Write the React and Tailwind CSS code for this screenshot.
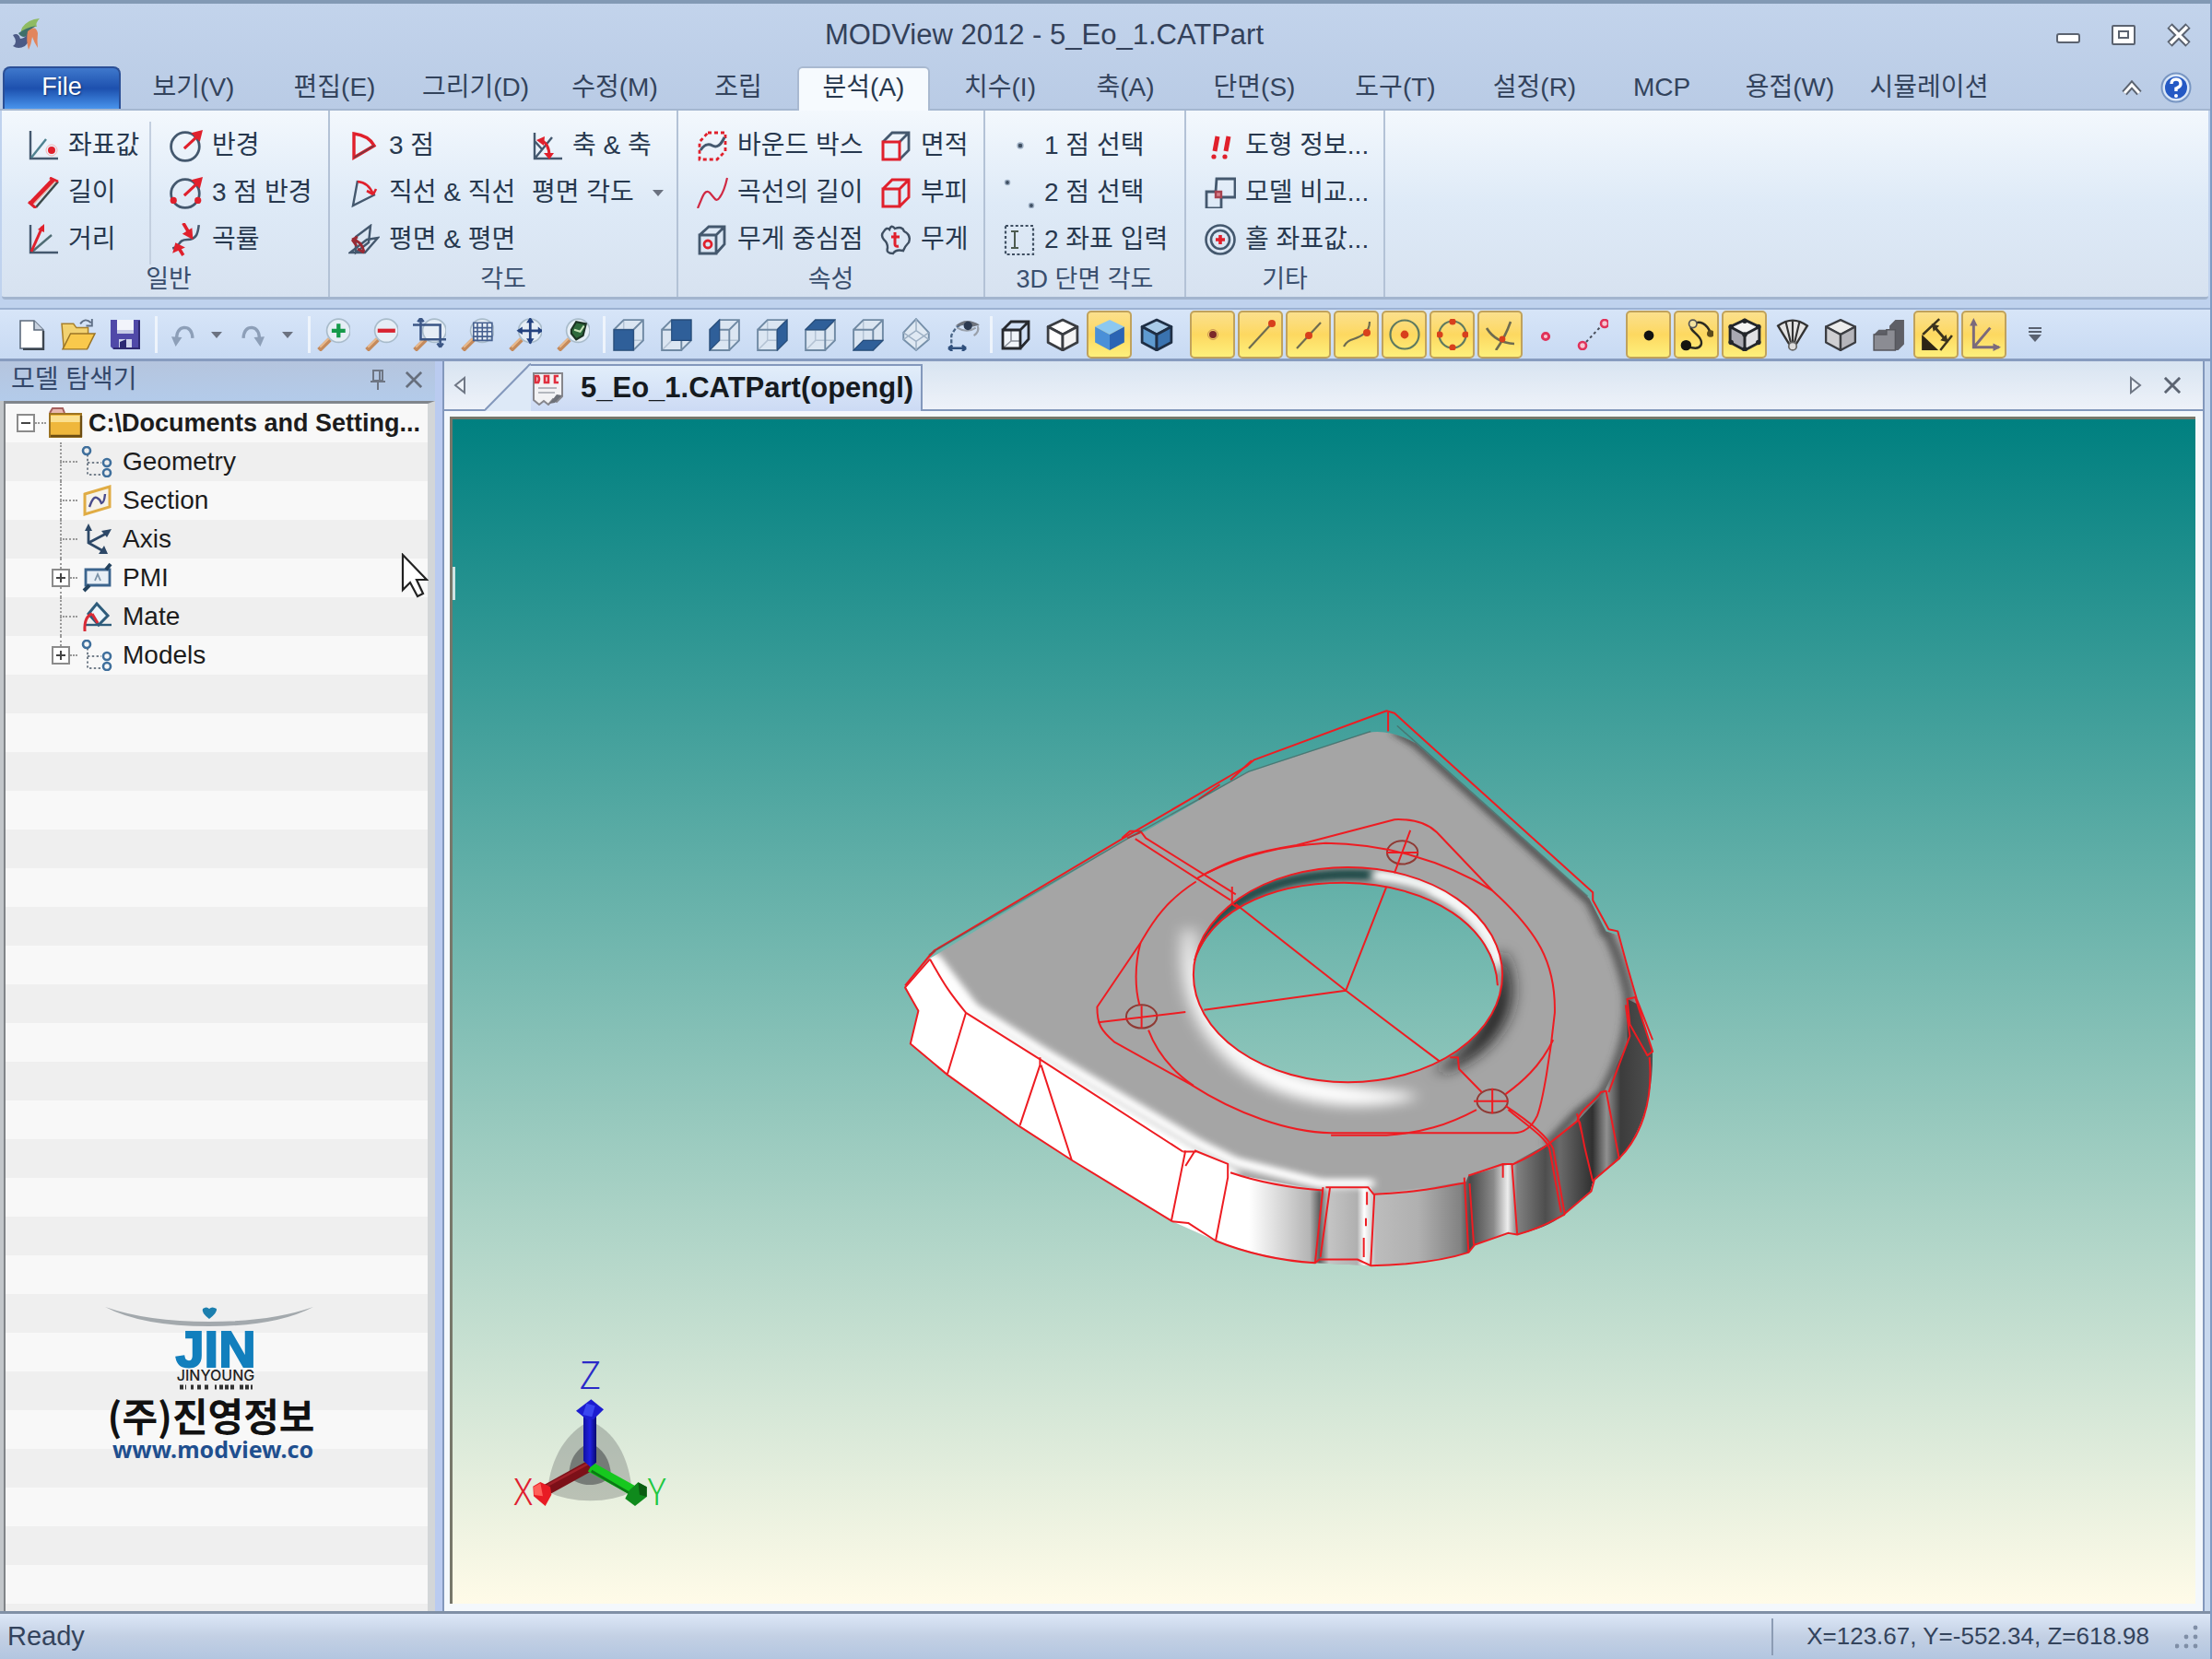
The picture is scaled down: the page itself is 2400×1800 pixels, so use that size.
import React from "react";

const LATIN = "font-['Liberation_Sans','Noto_Sans_CJK_KR',sans-serif]";

function Icon({ size = "h-[34px] w-[34px]", children }) {
  return (
    <svg viewBox="0 0 34 34" className={`shrink-0 ${size}`} fill="none" strokeWidth="2.4" aria-hidden="true">
      {children}
    </svg>
  );
}

const SLATE = "#44586e";
const RED = "#e0202c";

/* ---------- ribbon icons ---------- */
const ribbonIcons = {
  coord: (
    <Icon>
      <path d="M3 1V31H33" stroke={SLATE} />
      <path d="M4 30L20 10" stroke="#4f8290" />
      <circle cx="26" cy="22" r="4" fill={RED} />
      <circle cx="26" cy="22" r="6" stroke="#f3b3b3" strokeWidth="1" />
    </Icon>
  ),
  length: (
    <Icon>
      <path d="M9 33L33 5" stroke="#3d4a4a" strokeWidth="2.6" />
      <path d="M3 29L28 3" stroke={RED} strokeWidth="5" />
      <path d="M1 27L9 34M24 1L33 5" stroke={RED} strokeWidth="3" />
      <path d="M7 29L30 5" stroke="#e9b7a5" strokeWidth="1.2" />
    </Icon>
  ),
  distance: (
    <Icon>
      <path d="M3 1V31H33" stroke={SLATE} />
      <path d="M5 30L26 12" stroke="#4f6c74" />
      <path d="M4 30L16 3" stroke={RED} strokeWidth="3" />
      <path d="M18 0L11 6L18 9Z" fill={RED} />
    </Icon>
  ),
  radius: (
    <Icon size="h-9 w-9">
      <circle cx="16" cy="18" r="14.5" stroke={SLATE} strokeWidth="2.6" />
      <path d="M15 20L29 7" stroke={RED} strokeWidth="3" />
      <path d="M34 1L22 4L31 13Z" fill={RED} />
    </Icon>
  ),
  radius3: (
    <Icon size="h-9 w-9">
      <circle cx="16" cy="18" r="14.5" stroke={SLATE} strokeWidth="2.6" />
      <path d="M15 20L29 7" stroke={RED} strokeWidth="3" />
      <path d="M34 1L22 4L31 13Z" fill={RED} />
      <circle cx="4" cy="25" r="3.4" fill={RED} />
      <circle cx="29" cy="25" r="3.4" fill={RED} />
    </Icon>
  ),
  curvature: (
    <Icon size="h-9 w-9">
      <path d="M3 26C12 24 8 17 18 17S29 10 30 2" stroke={SLATE} />
      <path d="M14 0L21 12" stroke={RED} strokeWidth="3.4" />
      <path d="M24 17L13 11L23 5Z" fill={RED} />
      <path d="M14 33L9 25" stroke={RED} strokeWidth="3.4" />
      <path d="M6 20L3 31L16 25Z" fill={RED} />
    </Icon>
  ),
  angle3: (
    <Icon>
      <path d="M6 4V30L28 17Q22 6 6 4Z" stroke={RED} strokeWidth="3.4" />
      <path d="M6 30L28 17" stroke="#7c3740" strokeWidth="2" />
    </Icon>
  ),
  angleLine: (
    <Icon>
      <path d="M10 4L5 31L29 19" stroke={SLATE} />
      <path d="M10 5Q22 6 27 19M27 19L20 15M27 19L30 13" stroke={RED} strokeWidth="2.6" />
    </Icon>
  ),
  anglePlane: (
    <Icon>
      <path d="M8 14L24 2L22 20L8 31Z" stroke={SLATE} fill="#dbe6f2" />
      <path d="M2 31L20 17L32 15L18 31Z" stroke={SLATE} />
      <path d="M4 17Q14 18 17 30M4 17L10 14M4 17L9 24M17 31L10 27" stroke="#9b2933" strokeWidth="2.8" />
    </Icon>
  ),
  axisAxis: (
    <Icon>
      <path d="M3 3V31H33M4 30L22 8M3 12L12 22" stroke={SLATE} />
      <path d="M9 11Q19 14 19 29" stroke={RED} strokeWidth="3" />
      <path d="M5 11L14 7L13 17ZM19 32L13 25H24Z" fill={RED} />
    </Icon>
  ),
  bound: (
    <Icon>
      <path d="M12 3H31V23L22 32H3V13Z" stroke={RED} strokeWidth="2.8" strokeDasharray="4 3" />
      <path d="M4 22Q10 13 17 17T30 8" stroke={SLATE} strokeWidth="3" />
    </Icon>
  ),
  curve: (
    <Icon>
      <path d="M1 34L6 22Q10 13 14 17L19 23Q22 27 25 22Q30 15 33 1" stroke="#d02a44" strokeWidth="2.2" />
    </Icon>
  ),
  center: (
    <Icon>
      <path d="M3 12H21V32H3ZM3 12L13 3H30V22L21 32M21 12L30 3" stroke={SLATE} strokeWidth="2.8" />
      <circle cx="12" cy="22" r="4" stroke={RED} strokeWidth="2.8" />
    </Icon>
  ),
  area: (
    <Icon>
      <path d="M3 13L13 3H31V22L21 32M21 13L31 3" stroke={SLATE} strokeWidth="2.8" />
      <path d="M3 13H21V32H3Z" stroke={RED} strokeWidth="3" />
    </Icon>
  ),
  volume: (
    <Icon>
      <path d="M3 13H21V32H3ZM3 13L13 3H31V22L21 32M21 13L31 3" stroke={RED} strokeWidth="3" />
    </Icon>
  ),
  weight: (
    <Icon>
      <path d="M10 6Q12 0 16 5Q24 2 26 8Q34 12 31 20Q27 24 25 29Q17 27 14 32Q6 32 8 26Q8 20 4 17Q0 12 4 8Q7 3 10 6Z" stroke="#3f4f62" />
      <path d="M16 9V22Q16 25 20 24M12 14H21" stroke={RED} strokeWidth="3" />
    </Icon>
  ),
  point1: (
    <Icon>
      <circle cx="18" cy="17" r="3" fill="#3f4f62" stroke="#9fb0c4" strokeWidth="1.4" />
    </Icon>
  ),
  point2: (
    <Icon>
      <circle cx="4" cy="6" r="2.6" fill="#3f4f62" stroke="#9fb0c4" strokeWidth="1.4" />
      <circle cx="30" cy="31" r="2.6" fill="#3f4f62" stroke="#9fb0c4" strokeWidth="1.4" />
    </Icon>
  ),
  input2: (
    <Icon>
      <rect x="2" y="2" width="30" height="31" stroke="#3f4f62" strokeWidth="2.2" strokeDasharray="3 2.4" />
      <path d="M8 8H16M12 8V26M8 26H16" stroke="#4d5b50" strokeWidth="2" />
    </Icon>
  ),
  info: (
    <Icon>
      <path d="M14 7L11 23M26 7L23 23" stroke={RED} strokeWidth="5" />
      <circle cx="10" cy="29" r="2.6" fill={RED} />
      <circle cx="22" cy="29" r="2.6" fill={RED} />
    </Icon>
  ),
  compare: (
    <Icon>
      <path d="M13 2H33V22H18V34H2V16H12Z" stroke={SLATE} strokeWidth="2.8" />
      <path d="M12 16H18V22H12Z" fill="#d9808a" stroke="#a8424f" />
    </Icon>
  ),
  hole: (
    <Icon>
      <circle cx="17" cy="17" r="15.5" stroke={SLATE} strokeWidth="2.6" />
      <circle cx="17" cy="17" r="10" stroke={SLATE} strokeWidth="2.6" />
      <path d="M17 12V22M12 17H22" stroke={RED} strokeWidth="3.6" />
    </Icon>
  ),
};

/* ---------- toolbar icons ---------- */
function FaceCube({ face }) {
  return (
    <Icon size="h-9 w-[38px]">
      <path d="M2 12L12 2H32V23L22 33H2Z" fill="#dbe6f2" />
      <path d="M12 2V23H32M12 23L2 33" stroke="#b4c3d4" strokeWidth="1.4" />
      <path d="M2 12H22V33H2ZM2 12L12 2H32V23L22 33M22 12L32 2" stroke="#6f89a3" strokeWidth="1.8" />
      {face && <path d={face} fill="#2f5f99" stroke="#234a7a" strokeWidth="1" />}
    </Icon>
  );
}

function IsoCube({ top, left, right, stroke = "none", sw = 2.6 }) {
  return (
    <Icon size="h-9 w-9">
      <path d="M17 2L32 9L17 17L2 9Z" fill={top} stroke={stroke} strokeWidth={sw} strokeLinejoin="round" />
      <path d="M2 9L17 17V33L2 25Z" fill={left} stroke={stroke} strokeWidth={sw} strokeLinejoin="round" />
      <path d="M32 9L17 17V33L32 25Z" fill={right} stroke={stroke} strokeWidth={sw} strokeLinejoin="round" />
    </Icon>
  );
}

function Lens({ children }) {
  return (
    <Icon size="h-9 w-9">
      <path d="M13 22L2 33" stroke="#c48a5c" strokeWidth="5" />
      <path d="M12 21L3 30" stroke="#e8b98c" strokeWidth="2" />
      <circle cx="22" cy="13" r="12" fill="#e6eef6" stroke="#a9bccb" strokeWidth="1.6" />
      {children}
    </Icon>
  );
}

const fileTools = [
  ["새 파일", <Icon><path d="M5 2H20L30 12V32H5Z" fill="#fff" stroke="#5d6b7c" strokeWidth="1.6" /><path d="M20 2V12H30" fill="#c8d2e0" stroke="#5d6b7c" strokeWidth="1.6" /><path d="M30 13V33H8" stroke="#3d4650" strokeWidth="2.4" /></Icon>],
  ["열기", <Icon size="h-9 w-10"><path d="M0 6H12L15 10H27V30H2Z" fill="#f2d271" stroke="#a87f2a" strokeWidth="1.4" /><path d="M9 16H34L26 32H1Z" fill="#f9c94c" stroke="#9a7426" strokeWidth="1.4" /><path d="M19 6Q24 -1 30 5M31 1V8H25" stroke="#5f6f86" strokeWidth="1.8" /></Icon>],
  ["저장", <Icon><path d="M1 1H33V33H4L1 30Z" fill="#5049a8" /><path d="M8 1H26V16H8Z" fill="#f2f4fb" /><path d="M8 12H26V16H8Z" fill="#c6cbe6" /><path d="M10 22H24V33H10Z" fill="#cfd3ec" /><path d="M11 25L18 22V33H11Z" fill="#2c2873" /><path d="M32 2V32H4" stroke="#2f2a72" strokeWidth="2" /></Icon>],
];

const undoIcon = <Icon size="h-7 w-[26px]"><path d="M7 26Q7 8 18 7Q29 7 30 22" stroke="#8d9fb8" strokeWidth="4.4" /><path d="M0 20L15 21L6 34Z" fill="#8d9fb8" /></Icon>;
const redoIcon = <Icon size="h-7 w-[26px]"><path d="M4 22Q5 7 16 7Q27 8 27 26" stroke="#8d9fb8" strokeWidth="4.4" /><path d="M34 20L19 21L28 34Z" fill="#8d9fb8" /></Icon>;

const zoomTools = [
  ["확대", <Lens><path d="M22 6V20M15 13H29" stroke="#159a4a" strokeWidth="4" /></Lens>],
  ["축소", <Lens><path d="M13 13H31" stroke="#d8232f" strokeWidth="4" /></Lens>],
  ["영역 확대", <Lens><path d="M8 2V22H34M0 7H28V30M28 30L25 26M28 30L31 26M8 0L5 4M8 0L11 4" stroke="#3b5685" strokeWidth="2.4" /></Lens>],
  ["창 확대", <Lens><path d="M13 5H32V23H13ZM17 5V23M22 5V23M27 5V23M13 10H32M13 14H32M13 19H32" stroke="#46608f" strokeWidth="1.5" /></Lens>],
  ["전체 보기", <Lens><path d="M22 1V26M10 13H34" stroke="#24427f" strokeWidth="2.6" /><path d="M22 -1L18 5H26ZM22 27L18 21H26ZM8 13L14 9V17ZM35 13L30 9V17Z" fill="#24427f" /></Lens>],
  ["선택 확대", <Lens><path d="M15 12L20 4L30 6L27 18L20 22L15 16Z" fill="#2f6a3c" stroke="#1c3323" strokeWidth="2" /><path d="M18 12L24 14L28 8" stroke="#c7e2b8" strokeWidth="2" /></Lens>],
];

const viewTools = [
  ["정면", <FaceCube face="M2 12H22V33H2Z" />],
  ["후면", <FaceCube face="M12 2H32V23H12Z" />],
  ["좌측", <FaceCube face="M2 12L12 2V23L2 33Z" />],
  ["우측", <FaceCube face="M22 12L32 2V23L22 33Z" />],
  ["윗면", <FaceCube face="M2 12L12 2H32L22 12Z" />],
  ["아랫면", <FaceCube face="M2 33L12 23H32L22 33Z" />],
  ["등각", <Icon size="h-9 w-9"><path d="M17 1L30 15V22L17 33L4 22V15Z" fill="#dfe9f3" stroke="#7690aa" strokeWidth="1.8" /><path d="M4 15L17 24L30 15M17 24V33M4 22L17 13L30 22M17 1V13" stroke="#9db0c4" strokeWidth="1.4" /></Icon>],
  ["시점", <Icon size="h-9 w-[38px]"><path d="M4 32V18Q9 7 17 6" stroke="#4c6788" strokeWidth="2.2" strokeDasharray="4 2" /><path d="M1 31H19M1 31L5 28M1 31L5 34M19 31L15 28M19 31L15 34" stroke="#2f4f7c" /><path d="M8 8Q19 -2 33 7L26 9Q21 4 14 8Z" fill="#6f747d" /><path d="M10 10Q20 16 29 10M31 8Q33 14 27 18" stroke="#9aa1ab" strokeWidth="2" /><circle cx="21" cy="8" r="4.4" fill="#2c3a50" /></Icon>],
];

const shadeTools = [
  ["와이어프레임", <Icon><path d="M3 12H22V32H3Z" fill="#f1f5fa" /><path d="M12 12V24H22M12 24L4 31" stroke="#8b9099" strokeWidth="1.6" /><path d="M3 12H22V32H3ZM3 12L12 3H31V22L22 32M22 12L31 3" stroke="#26292e" strokeWidth="2.8" /></Icon>],
  ["은선", <IsoCube top="#fff" left="#fff" right="#f4f4f4" stroke="#3a3d42" />],
  ["음영", <IsoCube top="#8cc8f0" left="#4a90d8" right="#2a64b4" />, true],
  ["모서리 음영", <IsoCube top="#a9cbe8" left="#5f9bd0" right="#3a73b0" stroke="#1f2f45" />],
];

const PT = "#d8401c";
const snapTools = [
  ["점", <Icon><circle cx="17" cy="17" r="4" fill="#7c2a2a" /><circle cx="17" cy="17" r="5.4" stroke="#c79050" strokeWidth="1" /></Icon>],
  ["끝점", <Icon><path d="M4 32L27 7" stroke="#6e6c50" strokeWidth="2.2" /><circle cx="29" cy="5" r="4" fill={PT} /></Icon>],
  ["중간점", <Icon><path d="M4 32L30 4" stroke="#6e6c50" strokeWidth="2.2" /><circle cx="17" cy="18" r="4" fill={PT} /></Icon>],
  ["근처점", <Icon><path d="M3 30C8 20 16 24 25 16Q31 12 31 3" stroke="#6e6c50" strokeWidth="2.2" /><circle cx="28" cy="15" r="4" fill={PT} /></Icon>],
  ["중심점", <Icon><circle cx="17" cy="17" r="15.5" stroke="#5f7a60" strokeWidth="2.2" /><circle cx="17" cy="17" r="4.4" fill={PT} /></Icon>],
  ["사분점", <Icon><circle cx="17" cy="17" r="14.5" stroke="#5f7a60" strokeWidth="2.2" />{[[17, 3], [17, 31], [3, 17], [31, 17]].map(([x, y]) => <circle key={`${x}-${y}`} cx={x} cy={y} r="3.6" fill={PT} />)}</Icon>],
  ["교차점", <Icon><path d="M2 10Q12 26 32 27M28 3Q22 20 12 34" stroke="#6e6c50" strokeWidth="2.6" /><circle cx="19" cy="22" r="3.4" fill={PT} /></Icon>],
];

const pointTools = [
  ["자유점", <Icon><circle cx="17" cy="19" r="3.6" stroke="#e0325a" strokeWidth="3" fill="#f7c7d2" /></Icon>],
  ["두 점", <Icon><path d="M10 25L26 8" stroke="#4a4f5c" strokeWidth="2" strokeDasharray="3 3" /><circle cx="6" cy="29" r="4" stroke="#e0325a" strokeWidth="2.6" fill="#f7c7d2" /><circle cx="30" cy="5" r="4" stroke="#e0325a" strokeWidth="2.6" fill="#f7c7d2" /></Icon>],
];

const filterTools = [
  ["정점", <Icon><circle cx="17" cy="18" r="5.4" fill="#111" /></Icon>, true],
  ["모서리", <Icon size="h-9 w-9"><path d="M7 29C24 35 24 24 18 18S8 10 14 6S27 6 31 15" stroke="#2b2a20" strokeWidth="2.4" /><circle cx="6" cy="28" r="5.4" fill="#15140f" /><circle cx="13" cy="6" r="4" fill="#f3e3a0" stroke="#555" strokeWidth="1.6" /><circle cx="31" cy="16" r="3.6" fill="#5b4a1c" /></Icon>, true],
  ["면", <Icon size="h-9 w-9"><path d="M17 2L32 9L17 17L2 9Z" fill="#f4f4f4" /><path d="M2 9L17 17V33L2 25Z" fill="#a9a9b2" /><path d="M32 9L17 17V33L32 25Z" fill="#e0e0e4" /><path d="M17 2L32 9V25L17 33L2 25V9ZM2 9L17 17L32 9M17 17V33" stroke="#23262b" strokeWidth="2.8" strokeLinejoin="round" />{[[17, 3], [31, 9], [31, 25], [17, 32], [3, 25], [3, 9], [17, 17]].map(([x, y]) => <circle key={`${x}-${y}`} cx={x} cy={y} r="2.6" fill="#23262b" />)}</Icon>, true],
  ["서피스", <Icon size="h-9 w-9"><path d="M2 8Q17 -3 32 8L21 26Q17 31 13 26Z" fill="#e4e4e4" stroke="#333" strokeWidth="2.2" /><path d="M10 4L15 25M17 3V25M24 4L19 25" stroke="#333" strokeWidth="2" /><circle cx="17" cy="29" r="4" fill="#dcdcdc" stroke="#666" strokeWidth="1.6" /></Icon>],
  ["솔리드", <IsoCube top="#ededed" left="#cfcfd2" right="#b5b5bb" stroke="#3b3d42" sw={2.2} />],
  ["파트", <Icon size="h-9 w-[38px]"><path d="M2 17L7 12H18V8L24 2H33V27L27 33H2Z" fill="#5e5f66" /><path d="M2 17H15V12H24V33H2Z" fill="#8b8c93" stroke="#55565c" strokeWidth="1.4" /></Icon>],
  ["치수", <Icon size="h-9 w-9"><path d="M2 17L19 33H2Z" fill="#2c2416" /><path d="M3 17L20 1M21 33L33 18" stroke="#3b331d" strokeWidth="2.4" /><path d="M14 8L27 23" stroke="#3b331d" strokeWidth="2.8" /><path d="M12 6L20 8L14 14ZM29 25L21 23L27 17Z" fill="#3b331d" /></Icon>, true],
  ["좌표축", <Icon size="h-9 w-9"><path d="M6 3V30H32M7 29L23 10" stroke="#7b6a7c" strokeWidth="2.8" /><path d="M6 0L2 8H10ZM34 30L26 26V34Z" fill="#7b6a7c" /></Icon>, true],
];

function Tool({ label, on, children }) {
  return (
    <button
      type="button"
      aria-label={label}
      className={
        on
          ? "flex h-[52px] w-[49px] items-center justify-center rounded-[5px] border-2 border-[#c0a25c] bg-linear-to-b from-[#fbe08c] via-[#fdd860] to-[#fdf07c]"
          : "flex h-[52px] w-[49px] items-center justify-center"
      }
    >
      {children}
    </button>
  );
}

function Caret() {
  return (
    <svg viewBox="0 0 12 8" className="h-2 w-3" aria-hidden="true">
      <path d="M0 1H12L6 8Z" fill="#6b7280" />
    </svg>
  );
}

const Divider = ({ className }) => <span className={`h-10 w-[3px] shrink-0 bg-[#eef4fc] ${className}`} />;

/* ---------- ribbon ---------- */
const tabs = [
  ["보기(V)", "w-[152px]"],
  ["편집(E)", "w-[154px]"],
  ["그리기(D)", "w-[152px]"],
  ["수정(M)", "w-[150px]"],
  ["조립", "w-[118px]"],
  ["분석(A)", "w-[154px]"],
  ["치수(I)", "w-[142px]"],
  ["축(A)", "w-[130px]"],
  ["단면(S)", "w-[150px]"],
  ["도구(T)", "w-[156px]"],
  ["설정(R)", "w-[146px]"],
  ["MCP", "w-[130px]"],
  ["용접(W)", "w-[148px]"],
  ["시뮬레이션", "w-[154px]"],
];

function Item({ icon, children }) {
  return (
    <button type="button" className="flex h-[51px] items-center gap-2.5 text-[28px] leading-[51px] whitespace-nowrap text-[#27384e]">
      {ribbonIcons[icon]}
      {children}
    </button>
  );
}

function Group({ label, className, children }) {
  return (
    <section aria-label={label} className={`flex flex-col border-r-2 border-[#b3c2d6] pt-3 ${className}`}>
      <div className="flex flex-1">{children}</div>
      <h2 className="-ml-5 pb-[3px] text-center text-[27px] leading-8 text-[#3a4f6e]">{label}</h2>
    </section>
  );
}

function Ribbon() {
  return (
    <div className="mx-[2px] flex h-[205px] rounded-b-sm border-b-[3px] border-[#a3b5ce] bg-linear-to-b from-[#f3f8fd] via-[#deeaf7] to-[#d7e2f0]">
      <Group label="일반" className="w-[356px] pl-7">
        <div className="w-[134px] border-r-2 border-[#c3cfdf]">
          <Item icon="coord">좌표값</Item>
          <Item icon="length">길이</Item>
          <Item icon="distance">거리</Item>
        </div>
        <div className="pl-5">
          <Item icon="radius">반경</Item>
          <Item icon="radius3">3 점 반경</Item>
          <Item icon="curvature">곡률</Item>
        </div>
      </Group>
      <Group label="각도" className="w-[378px] pl-5">
        <div className="w-[199px]">
          <Item icon="angle3">3 점</Item>
          <Item icon="angleLine">직선 &amp; 직선</Item>
          <Item icon="anglePlane">평면 &amp; 평면</Item>
        </div>
        <div>
          <Item icon="axisAxis">축 &amp; 축</Item>
          <button type="button" className="flex h-[51px] items-center gap-5 text-[28px] whitespace-nowrap text-[#27384e]">
            평면 각도
            <Caret />
          </button>
        </div>
      </Group>
      <Group label="속성" className="w-[333px] pl-5">
        <div className="w-[199px]">
          <Item icon="bound">바운드 박스</Item>
          <Item icon="curve">곡선의 길이</Item>
          <Item icon="center">무게 중심점</Item>
        </div>
        <div>
          <Item icon="area">면적</Item>
          <Item icon="volume">부피</Item>
          <Item icon="weight">무게</Item>
        </div>
      </Group>
      <Group label="3D 단면 각도" className="w-[218px] pl-5">
        <div>
          <Item icon="point1">1 점 선택</Item>
          <Item icon="point2">2 점 선택</Item>
          <Item icon="input2">2 좌표 입력</Item>
        </div>
      </Group>
      <Group label="기타" className="w-[216px] pl-5">
        <div>
          <Item icon="info">도형 정보...</Item>
          <Item icon="compare">모델 비교...</Item>
          <Item icon="hole">홀 좌표값...</Item>
        </div>
      </Group>
    </div>
  );
}

function TitleBar() {
  return (
    <header className="bg-linear-to-b from-[#c3d4ec] to-[#b9cbe5]">
      <div className="flex h-[72px] items-center border-t-4 border-[#8299b4] px-3">
        <svg viewBox="0 0 36 36" className="h-9 w-9" aria-hidden="true">
          <path d="M12 10Q18 1 31 0Q26 5 28 9Q20 8 14 18Q9 16 12 10Z" fill="#8fbb62" />
          <path d="M8 16Q16 10 27 8Q19 13 17 19Q12 22 8 16Z" fill="#3f6f6a" />
          <path d="M2 18Q8 15 10 22Q17 21 18 15Q22 24 15 30Q8 34 2 30Q8 26 2 18Z" fill="#4b5a86" />
          <path d="M18 14Q27 6 29 16Q28 24 29 32Q25 26 23 20Q22 28 19 34Q16 24 18 14Z" fill="#e2855c" />
        </svg>
        <h1 className="flex-1 pr-3 text-center text-[31px] leading-10 text-[#33415a]">MODView 2012 - 5_Eo_1.CATPart</h1>
        <div className="flex items-center gap-8 pr-2">
          <button type="button" aria-label="최소화">
            <svg viewBox="0 0 28 28" className="h-7 w-7" fill="#fff" stroke="#5b6370" strokeWidth="2"><rect x="2" y="13" width="24" height="9" rx="2" /></svg>
          </button>
          <button type="button" aria-label="최대화">
            <svg viewBox="0 0 28 28" className="h-7 w-7" fill="#fff" stroke="#5b6370" strokeWidth="2"><rect x="2" y="4" width="24" height="20" rx="1" /><rect x="9" y="10" width="10" height="7" /></svg>
          </button>
          <button type="button" aria-label="닫기">
            <svg viewBox="0 0 28 28" className="h-7 w-7"><path d="M4 4L24 24M24 4L4 24" stroke="#5b6370" strokeWidth="7.5" /><path d="M5 5L23 23M23 5L5 23" stroke="#fff" strokeWidth="3.6" /></svg>
          </button>
        </div>
      </div>
      <nav className="flex h-12 items-stretch border-b-2 border-[#a5b7d0] pl-[3px] text-[28px] text-[#33435c]">
        <button type="button" className="mr-[3px] w-32 rounded-t-lg border-2 border-b-0 border-[#2b4f96] bg-linear-to-b from-[#3f78cc] via-[#1d50ae] to-[#4a94ec] pb-1 text-[27px] text-white [text-shadow:1px_1px_2px_#12316b]">
          File
        </button>
        {tabs.map(([name, width]) => {
          const active = name === "분석(A)";
          return (
            <button
              key={name}
              type="button"
              aria-pressed={active}
              className={`${width} shrink-0 leading-10 ${active ? "-mb-[2px] px-[5px]" : ""}`}
            >
              {active ? (
                <span className="block h-full rounded-t-md border-2 border-b-0 border-[#a9b9d0] bg-[#f6fafe] leading-[42px] text-[#27384e]">{name}</span>
              ) : (
                name
              )}
            </button>
          );
        })}
        <span className="ml-auto flex items-center gap-5 pr-5">
          <button type="button" aria-label="리본 접기">
            <svg viewBox="0 0 22 22" className="h-[22px] w-[22px]"><path d="M3 17L11 8L19 17" fill="none" stroke="#5b6370" strokeWidth="7" /><path d="M3 17L11 8L19 17" fill="none" stroke="#fff" strokeWidth="3" /></svg>
          </button>
          <button type="button" aria-label="도움말">
            <svg viewBox="0 0 34 34" className="h-[34px] w-[34px]">
              <circle cx="17" cy="17" r="15.5" fill="#dbe8f8" stroke="#7795c2" strokeWidth="2" />
              <circle cx="17" cy="17" r="12" fill="#2459c4" />
              <path d="M12 13Q12 8 17 8T22 13Q22 16 17 18V21" fill="none" stroke="#fff" strokeWidth="3.4" />
              <circle cx="17" cy="26" r="2" fill="#fff" />
            </svg>
          </button>
        </span>
      </nav>
    </header>
  );
}

function Toolbar() {
  return (
    <div role="toolbar" className="mt-[9px] flex h-[58px] items-center border-t-2 border-b-[3px] border-t-[#9cb1d2] border-b-[#879cbf] bg-linear-to-b from-[#d7e5f8] to-[#c8daf3]">
      <div className="flex gap-[2px] pl-[9px]">
        {fileTools.map(([l, i]) => <Tool key={l} label={l}>{i}</Tool>)}
      </div>
      <Divider className="ml-2" />
      <div className="flex items-center pl-[3px]">
        <Tool label="실행 취소">{undoIcon}</Tool>
        <span className="w-[6px]" />
        <Caret />
        <span className="w-2" />
        <Tool label="다시 실행">{redoIcon}</Tool>
        <span className="w-2" />
        <Caret />
      </div>
      <Divider className="ml-4" />
      <div className="flex gap-[3px]">
        {zoomTools.map(([l, i]) => <Tool key={l} label={l}>{i}</Tool>)}
      </div>
      <Divider className="ml-2" />
      <div className="flex gap-[3px] pr-1">
        {viewTools.map(([l, i]) => <Tool key={l} label={l}>{i}</Tool>)}
      </div>
      <Divider />
      <div className="flex gap-[2px]">
        {shadeTools.map(([l, i, on]) => <Tool key={l} label={l} on={on}>{i}</Tool>)}
      </div>
      <div className="ml-3 flex gap-[3px]">
        {snapTools.map(([l, i]) => <Tool key={l} label={l} on>{i}</Tool>)}
      </div>
      <div className="flex gap-[2px]">
        {pointTools.map(([l, i]) => <Tool key={l} label={l}>{i}</Tool>)}
      </div>
      <div className="ml-3 flex gap-[3px]">
        {filterTools.map(([l, i, on]) => <Tool key={l} label={l} on={on}>{i}</Tool>)}
      </div>
      <button type="button" aria-label="도구 더 보기" className="ml-6">
        <svg viewBox="0 0 14 18" className="h-[18px] w-3.5"><path d="M0 2H14M0 6H14" stroke="#5a6270" strokeWidth="2" /><path d="M0 9H14L7 17Z" fill="#5a6270" /></svg>
      </button>
    </div>
  );
}

/* ---------- model tree ---------- */
const nodeIcon = (
  <Icon>
    <path d="M7 9V31H22M7 18H22" stroke="#75808c" strokeWidth="2" strokeDasharray="2.4 2.4" />
    <circle cx="6" cy="5" r="4" stroke="#3f6f9c" strokeWidth="2.6" />
    <circle cx="28" cy="18" r="4" stroke="#3f6f9c" strokeWidth="2.6" />
    <circle cx="28" cy="29" r="4" stroke="#3f6f9c" strokeWidth="2.6" />
  </Icon>
);

const nodes = [
  ["Geometry", false, nodeIcon],
  ["Section", false, <Icon><path d="M4 10L31 2V24L4 32Z" stroke="#e0ac44" strokeWidth="3" fill="#f6f3ea" /><path d="M9 24Q13 12 17 14T22 20Q25 20 26 10" stroke="#4a4c8c" strokeWidth="2.4" /></Icon>],
  ["Axis", false, <Icon><path d="M8 4V21L26 31M8 21L27 11" stroke="#2d4867" strokeWidth="2.8" /><path d="M8 0L4 8H12ZM33 6L22 8L28 15ZM29 33L19 33L25 24Z" fill="#2d4867" /></Icon>],
  ["PMI", true, <Icon><path d="M5 8H31V25H5Z" stroke="#3c658e" strokeWidth="2.8" fill="#e8eff6" /><path d="M3 31L9 25M27 8L32 2" stroke="#24435f" strokeWidth="4" /><path d="M15 20L18 13L21 20" stroke="#7c93a8" strokeWidth="1.8" /></Icon>],
  ["Mate", false, <Icon><path d="M17 3L29 16L19 26L8 14Z" stroke="#2e5c7b" strokeWidth="3" fill="#eaf4fa" /><path d="M4 26H33" stroke="#2e5c7b" strokeWidth="2.4" /><path d="M4 33Q3 17 12 14M12 14L18 24" stroke="#d92a36" strokeWidth="3" /></Icon>],
  ["Models", true, nodeIcon],
];

function Expander({ open }) {
  return (
    <button type="button" aria-label={open ? "접기" : "펼치기"} className="h-5 w-5 shrink-0 border-2 border-[#8b8b8b] bg-white">
      <svg viewBox="0 0 16 16" className="h-4 w-4"><path d={open ? "M3 8H13" : "M3 8H13M8 3V13"} stroke="#444" strokeWidth="2" /></svg>
    </button>
  );
}

function Company() {
  return (
    <svg viewBox="0 0 280 220" className="mb-[137px] ml-[84px] h-[220px] w-[280px] shrink-0" role="img" aria-label="(주)진영정보">
      <path d="M24 27Q70 43 137 43T250 27Q210 48 137 48T24 27Z" fill="#a3a9ad" />
      <path d="M130 29Q134 26 137 29Q140 26 145 29Q146 33 137 40Q128 33 130 29Z" fill="#1c7fae" />
      <text x="144" y="92" textAnchor="middle" fontSize="56" fontWeight="700" fill="#127fbd" stroke="#127fbd" strokeWidth="2" fontFamily="Liberation Sans, sans-serif">JIN</text>
      <text x="144" y="107" textAnchor="middle" fontSize="16" fontWeight="500" fill="#222" fontFamily="Inter, sans-serif">JINYOUNG</text>
      <path d="M105 114H112M117 114H120M124 114H129M132 114H138M143 114H145M148 114H165M170 114H184" stroke="#333" strokeWidth="5" strokeDasharray="4 2" />
      <text x="139" y="162" textAnchor="middle" fontSize="42" fontWeight="700" fill="#111" fontFamily="Noto Sans CJK KR, sans-serif">(주)진영정보</text>
      <text x="141" y="191" textAnchor="middle" fontSize="25" fontWeight="700" fill="#1f4f8f" fontFamily="Noto Sans, sans-serif">www.modview.co</text>
    </svg>
  );
}

function Explorer() {
  return (
    <aside className="relative flex w-[472px] shrink-0 flex-col bg-[#b6c7e1]">
      <div className="flex h-[43px] items-center bg-linear-to-b from-[#b5c5de] to-[#b3cbea] pr-3 pb-1 pl-3">
        <h2 className="flex-1 text-[28px] leading-8 text-[#34486b]">모델 탐색기</h2>
        <button type="button" aria-label="고정" className="mr-5">
          <svg viewBox="0 0 20 24" className="h-6 w-5" fill="none" stroke="#6e7684" strokeWidth="2"><path d="M5 2H15V13H5ZM12 2V13M2 14H18M10 14V23" /></svg>
        </button>
        <button type="button" aria-label="탐색기 닫기" className="pr-[2px]">
          <svg viewBox="0 0 20 20" className="h-[18px] w-[18px]" stroke="#666e7c" strokeWidth="3"><path d="M1 1L19 19M19 1L1 19" /></svg>
        </button>
      </div>
      <div className="flex flex-1 flex-col border-l-4 border-[#c2c6ca]">
        <div className="flex flex-1 flex-col justify-between border-t-3 border-r-8 border-l-2 border-t-[#80858c] border-r-[#d3d6d8] border-l-[#808488] bg-[repeating-linear-gradient(to_bottom,#f8f8f8_0px,#f8f8f8_42px,#efefef_42px,#efefef_84px)] text-[28px] text-[#1c1c1c]">
          <ul>
            <li>
              <div className="flex h-[42px] items-center pl-3">
                <Expander open />
                <span className="mr-[2px] w-3 border-t-2 border-dotted border-[#999]" />
                <svg viewBox="0 0 38 34" className="h-[34px] w-[38px] shrink-0" aria-hidden="true">
                  <path d="M2 6L5 1H16L18 6" fill="#e8b7b0" stroke="#a6605e" strokeWidth="2" />
                  <path d="M2 7H36V32H2Z" fill="#efb73c" stroke="#9c7322" strokeWidth="2" />
                  <path d="M3 9H35V16H3Z" fill="#fbe08f" />
                  <path d="M3 31H36V9" fill="none" stroke="#6d4d12" strokeWidth="2.4" />
                </svg>
                <span className="ml-1.5 text-[27px] leading-[42px] font-bold whitespace-nowrap">C:\Documents and Setting...</span>
              </div>
              <ul>
                {nodes.map(([name, expandable, icon], i) => (
                  <li key={name} className="flex h-[42px] items-center pl-[50px]">
                    <span className="flex h-[42px] w-5 flex-col items-center">
                      <span className="flex-1 border-l-2 border-dotted border-[#999]" />
                      {expandable && <Expander />}
                      <span className={`flex-1 border-l-2 border-dotted ${i === nodes.length - 1 ? "border-transparent" : "border-[#999]"}`} />
                    </span>
                    <span className={`mr-1 border-t-2 border-dotted border-[#999] ${expandable ? "w-2" : "-ml-2 w-4"}`} />
                    {icon}
                    <span className="ml-[11px] leading-[42px]">{name}</span>
                  </li>
                ))}
              </ul>
            </li>
          </ul>
          <Company />
        </div>
      </div>
      <svg viewBox="0 0 30 50" className="absolute top-[208px] left-[435px] h-[50px] w-[30px]" aria-hidden="true">
        <path d="M2 2V40L10 32L18 47L24 44L17 29H28Z" fill="#fff" stroke="#222" strokeWidth="2.2" />
      </svg>
    </aside>
  );
}

/* ---------- 3D view ---------- */
const edges = [
  "M75 780L120 705L130 690L500 390L720 215L735 198L985 72L1000 78L1375 540L1375 560L1405 635L1422 640L1440 730L1458 815",
  "M988 75V125M690 250L730 200M630 300L670 262",
  "M120 705L132 690M122 712L75 785L100 845L85 930L155 1010L290 1142L390 1230L580 1388",
  "M122 712C150 780 160 800 190 850L330 970L600 1208",
  "M190 850L155 1008M330 985L292 1140M332 985L390 1230M330 965V990",
  "M605 1205L578 1388M600 1208H625M622 1208L605 1245M622 1205L685 1240L685 1275L662 1438M690 1262C750 1290 810 1302 865 1308",
  "M580 1388L610 1392L662 1438C730 1475 790 1490 850 1495L858 1486H930L955 1502C1030 1500 1090 1490 1140 1468L1152 1448L1215 1418L1232 1422C1280 1405 1300 1385 1322 1370",
  "M865 1300L850 1495M878 1302L860 1480M870 1300H950L962 1320L955 1502M948 1312V1345M946 1380V1400M942 1430V1480",
  "M962 1318C1030 1315 1080 1302 1135 1288M1132 1275L1140 1468M1142 1290L1150 1448M1140 1270L1205 1240H1222L1232 1420",
  "M1205 1240V1275M1222 1242C1250 1225 1270 1210 1290 1190L1345 1130C1350 1100 1375 1085 1390 1055L1400 1052L1425 1228",
  "M1350 1130L1360 1200L1375 1285M1345 1110L1355 1165M1320 1370L1372 1310L1378 1280L1425 1225C1465 1170 1490 1080 1482 965",
  "M1440 815L1455 810L1488 950L1478 960L1445 880ZM1437 830L1445 910L1405 1055M1458 815L1488 920",
  "M485 400L500 382H520L530 400L700 545M510 402L690 560M495 400L520 385",
  "M700 570L908 793L985 525M908 793L640 843M908 793L1085 975",
  "M625 505L645 490C720 440 790 420 870 413C980 415 1090 455 1185 535",
  "M645 490C700 450 740 435 815 418L1000 352C1040 350 1065 365 1080 385L1185 535C1270 640 1305 720 1303 850C1295 960 1280 1080 1270 1115C1258 1150 1240 1160 1225 1160H880C800 1158 700 1110 615 1035L470 925C445 895 438 880 438 835L520 670C545 610 570 560 625 512",
  "M520 670C508 730 510 790 518 830M535 895C550 950 580 1000 620 1038M1300 920C1275 990 1240 1030 1210 1060M1155 1100C1100 1140 1050 1160 985 1166H880",
  "M440 875L605 848M522 832V890M1030 380L1000 490M985 437H1045M1185 1045V1110M1150 1078H1215",
  "M1105 965H1120L1122 995L1165 1055M1210 1090C1260 1135 1290 1170 1300 1200L1322 1370M1215 1100C1250 1140 1285 1170 1293 1200L1315 1365",
  "M693 525V570L705 580",
];

function PartDrawing() {
  return (
    <svg viewBox="0 0 1568 1568" preserveAspectRatio="none" className="absolute top-[286px] left-[448px] h-[660px] w-[900px]" fill="none" role="img" aria-label="5_Eo_1">
      <defs>
        <linearGradient id="side" gradientUnits="userSpaceOnUse" x1="600" y1="0" x2="1490" y2="0">
          <stop offset="0" stopColor="#ffffff" />
          <stop offset="0.14" stopColor="#ffffff" />
          <stop offset="0.27" stopColor="#b4b4b4" />
          <stop offset="0.29" stopColor="#606060" />
          <stop offset="0.31" stopColor="#c4c4c4" />
          <stop offset="0.37" stopColor="#b0b0b0" />
          <stop offset="0.385" stopColor="#ffffff" />
          <stop offset="0.41" stopColor="#bcbcbc" />
          <stop offset="0.5" stopColor="#b0b0b0" />
          <stop offset="0.59" stopColor="#828282" />
          <stop offset="0.61" stopColor="#4a4a4a" />
          <stop offset="0.66" stopColor="#8a8a8a" />
          <stop offset="0.69" stopColor="#eeeeee" />
          <stop offset="0.71" stopColor="#808080" />
          <stop offset="0.77" stopColor="#4e4e4e" />
          <stop offset="0.8" stopColor="#6a6a6a" />
          <stop offset="0.87" stopColor="#303030" />
          <stop offset="0.9" stopColor="#909090" />
          <stop offset="0.93" stopColor="#3c3c3c" />
          <stop offset="1" stopColor="#505050" />
        </linearGradient>
        <linearGradient id="through" x1="0" y1="0" x2="0" y2="1">
          <stop offset="0" stopColor="#63b0a8" />
          <stop offset="1" stopColor="#8fc6bb" />
        </linearGradient>
        <filter id="soft" x="-20%" y="-20%" width="140%" height="140%">
          <feGaussianBlur stdDeviation="8" />
        </filter>
        <filter id="softer" x="-40%" y="-40%" width="180%" height="180%">
          <feGaussianBlur stdDeviation="16" />
        </filter>
        <clipPath id="body">
          <path d="M122 710L500 398L530 382L720 232L950 128Q990 118 1040 155L1368 555L1400 640L1422 650L1458 820L1488 950Q1490 1120 1425 1228L1375 1285L1370 1310L1320 1370Q1290 1405 1230 1422L1215 1415L1150 1450L1140 1468Q1060 1500 960 1502L850 1495Q760 1485 662 1438L580 1388L390 1232L290 1142L155 1010L85 930L100 845L75 780Z" />
        </clipPath>
        <clipPath id="hole">
          <ellipse cx="912" cy="752" rx="292" ry="278" />
        </clipPath>
      </defs>
      <g clipPath="url(#body)">
        <rect width="1568" height="1568" fill="#a5a5a5" />
        <path d="M1000 125L1040 158L1370 565L1400 650" stroke="#333" strokeWidth="12" filter="url(#soft)" />
        <path d="M1400 640Q1425 700 1442 800Q1450 920 1395 1055L1345 1110L1290 1190" stroke="#4b4b4b" strokeWidth="16" filter="url(#soft)" />
        <path d="M122 710L190 850L330 970L610 1205L685 1240L690 1265L865 1308L870 1300H955L962 1318L1135 1286L1140 1270L1220 1240L1290 1188L1345 1130L1395 1058L1440 930L1440 815L1568 900V1568H0V600Z" fill="url(#side)" />
        <path d="M122 700L200 835L340 955L625 1185L700 1235L860 1290H960" stroke="#fff" strokeWidth="24" filter="url(#soft)" />
        <path d="M122 712L200 860L340 985L620 1215L700 1270" stroke="#fff" strokeWidth="30" filter="url(#soft)" />
      </g>
      <path d="M612 640C585 850 690 1078 930 1082C965 1082 1000 1075 1030 1065C960 1055 900 1045 850 1030C720 990 630 880 612 640Z" fill="#fff" stroke="#fff" strokeWidth="16" strokeLinejoin="round" filter="url(#softer)" />
      <path d="M1200 700C1235 800 1215 930 1090 1000C1160 930 1200 840 1200 700Z" fill="#1e1e1e" stroke="#1e1e1e" strokeWidth="12" strokeLinejoin="round" filter="url(#softer)" />
      <ellipse cx="912" cy="752" rx="292" ry="278" fill="#9a9a9a" />
      <g clipPath="url(#hole)">
        <path d="M625 700C650 580 760 480 960 495" stroke="#1f4a46" strokeWidth="26" filter="url(#soft)" />
        <path d="M960 495C1060 505 1170 570 1200 720" stroke="#f4f8f7" strokeWidth="26" filter="url(#soft)" />
        <path d="M1070 535C1140 580 1180 650 1195 740" stroke="#fff" strokeWidth="12" filter="url(#soft)" />
        <path d="M620 735C640 610 740 515 905 515C1070 515 1195 630 1198 790C1190 930 1080 1030 925 1030C730 1025 620 900 620 735Z" fill="url(#through)" />
      </g>
      <g stroke="#ee1c22" strokeWidth="2" strokeLinejoin="round">
        <ellipse cx="912" cy="752" rx="292" ry="277" vectorEffect="non-scaling-stroke" />
        <path d="M622 715C650 600 750 515 905 515C1070 518 1190 630 1195 780" vectorEffect="non-scaling-stroke" />
        {[[1015, 437], [522, 860], [1185, 1078]].map(([x, y]) => (
          <ellipse key={x} cx={x} cy={y} rx="29" ry="30" stroke="#8f3a34" vectorEffect="non-scaling-stroke" />
        ))}
        {edges.map((d) => <path key={d} d={d} vectorEffect="non-scaling-stroke" />)}
      </g>
      <path d="M120 700L500 398L725 228L955 125M1005 110L1365 550" stroke="#4c5a56" strokeWidth="3" opacity="0.6" />
    </svg>
  );
}

function Triad() {
  return (
    <svg viewBox="0 0 690 660" className="absolute bottom-[70px] left-[38px] h-[220px] w-[230px]" role="img" aria-label="X Y Z">
      <defs>
        <linearGradient id="zAxis" x1="0" x2="1" y1="0" y2="0">
          <stop offset="0" stopColor="#1010a0" /><stop offset="0.5" stopColor="#2020e0" /><stop offset="1" stopColor="#080870" />
        </linearGradient>
      </defs>
      <path d="M195 505C205 390 260 310 333 275C410 305 462 390 470 505C400 545 270 545 195 505Z" fill="#6f7370" opacity="0.38" />
      <path d="M265 455C265 390 300 360 333 345C375 365 400 400 402 455C370 490 300 495 265 455Z" fill="#3f4446" opacity="0.55" />
      <path d="M335 420L190 500" stroke="#7c1018" strokeWidth="36" />
      <path d="M335 410L190 488" stroke="#a02028" strokeWidth="8" />
      <path d="M335 425L470 500" stroke="#16c81e" strokeWidth="34" />
      <path d="M338 438L465 512" stroke="#0a7a14" strokeWidth="8" />
      <path d="M312 260H354V410L335 425L312 405Z" fill="url(#zAxis)" />
      <path d="M337 205L378 238L345 270H322L288 242Z" fill="#1c1cd0" />
      <path d="M322 218L350 226L340 262L310 255Z" fill="#3a46f0" />
      <path d="M148 488L172 474L204 490L208 515L188 552L150 520Z" fill="#e81c24" />
      <path d="M150 490L172 478L180 520L152 516Z" fill="#ff6058" />
      <path d="M462 500L490 475L518 490V522L480 552L448 528Z" fill="#0f8a1c" />
      <path d="M490 475L518 490V522L495 515Z" fill="#0a5c10" />
      <text x="333" y="170" textAnchor="middle" fontSize="122" fill="#2a2ac8" fontFamily="Noto Sans CJK KR, sans-serif" fontWeight="300">Z</text>
      <text x="116" y="550" textAnchor="middle" fontSize="118" fill="#e02030" fontFamily="Noto Sans CJK KR, sans-serif" fontWeight="300">X</text>
      <text x="551" y="550" textAnchor="middle" fontSize="118" fill="#20c840" fontFamily="Noto Sans CJK KR, sans-serif" fontWeight="300">Y</text>
    </svg>
  );
}

function Document() {
  return (
    <main className="flex min-w-0 flex-1 flex-col border-x-2 border-[#8398bc] bg-[#f4f8fc]">
      <div className="flex h-[54px] items-stretch border-b-2 border-[#8398bc] bg-linear-to-b from-[#d8e4f1] to-[#eef2f9]">
        <button type="button" aria-label="이전 탭" className="pl-2.5">
          <svg viewBox="0 0 14 20" className="h-5 w-3.5"><path d="M12 2V18L2 10Z" fill="#eef3f9" stroke="#6f7785" strokeWidth="2" /></svg>
        </button>
        <div className="-mb-[2px] ml-5 flex">
          <svg viewBox="0 0 50 52" className="h-[54px] w-[50px]" preserveAspectRatio="none" aria-hidden="true">
            <path d="M0 52L46 6Q48 3 50 3V52Z" fill="#dde9f7" />
            <path d="M0 51L46 6Q48 3 50 3" fill="none" stroke="#8398bc" strokeWidth="2" />
          </svg>
          <button type="button" className="mt-[3px] flex items-center border-t-2 border-r-2 border-[#8398bc] bg-linear-to-b from-[#e2eefa] to-[#ccdaf4] pr-2 text-[31px] font-bold whitespace-nowrap text-[#151a20]">
            <svg viewBox="0 0 36 36" className="mr-[18px] h-9 w-9" aria-hidden="true">
              <path d="M3 1H34V26L28 32L24 29L19 35L14 31L9 35L3 30Z" fill="#f2f2f4" stroke="#86868c" strokeWidth="2" />
              <path d="M34 25L26 33L20 34L28 24Z" fill="#6d7078" />
              <path d="M5 4V11H8Q10 7 8 4ZM15 4H19V11H15ZM30 4H26V11H30" fill="none" stroke="#e02f3e" strokeWidth="2.6" />
              <path d="M8 17H28M8 22H26" stroke="#b4b7be" strokeWidth="2" />
            </svg>
            5_Eo_1.CATPart(opengl)
          </button>
        </div>
        <button type="button" aria-label="다음 탭" className="ml-auto">
          <svg viewBox="0 0 14 20" className="h-5 w-3.5"><path d="M2 2V18L12 10Z" fill="#eef3f9" stroke="#6f7785" strokeWidth="2" /></svg>
        </button>
        <button type="button" aria-label="문서 닫기" className="mr-6 ml-6">
          <svg viewBox="0 0 20 20" className="h-[18px] w-[18px]" stroke="#5c6472" strokeWidth="3.2"><path d="M1 1L19 19M19 1L1 19" /></svg>
        </button>
      </div>
      <div className="relative mt-1.5 mr-2 mb-2 ml-1.5 flex-1 overflow-hidden border-t-3 border-l-3 border-[#77776a] bg-linear-to-b/srgb from-[#008080] to-[#fffbe8]">
        <span className="absolute top-[160px] left-0 h-9 w-[3px] bg-[#cfe4e2]" />
        <PartDrawing />
        <Triad />
      </div>
    </main>
  );
}

export default function App() {
  return (
    <div className={`flex min-h-screen flex-col border-r-2 border-[#7f9cc4] bg-[#bfd2ee] ${LATIN}`}>
      <TitleBar />
      <Ribbon />
      <Toolbar />
      <div className="flex flex-1">
        <Explorer />
        <span className="w-2 shrink-0 bg-[#bacbf0]" />
        <Document />
        <span className="w-[6px] shrink-0 bg-[#c8d8ee]" />
      </div>
      <footer className="flex h-[52px] items-center border-t-3 border-[#8090a6] bg-linear-to-b from-[#dce7f7] via-[#c3d0e4] to-[#b3c6e0] text-[#33435c]">
        <span className="flex-1 pl-2 text-[29px]">Ready</span>
        <span className="flex h-10 items-center border-l-2 border-[#8c9cb4] pl-9 text-[26px] whitespace-nowrap">X=123.67, Y=-552.34, Z=618.98</span>
        <svg viewBox="0 0 26 26" className="mr-3 ml-7 h-[26px] w-[26px]" fill="#7f8ea6" aria-hidden="true">
          {[[22, 3], [22, 13], [22, 23], [12, 13], [12, 23], [2, 23]].map(([x, y]) => <circle key={`${x}-${y}`} cx={x} cy={y} r="2.4" />)}
        </svg>
      </footer>
    </div>
  );
}
